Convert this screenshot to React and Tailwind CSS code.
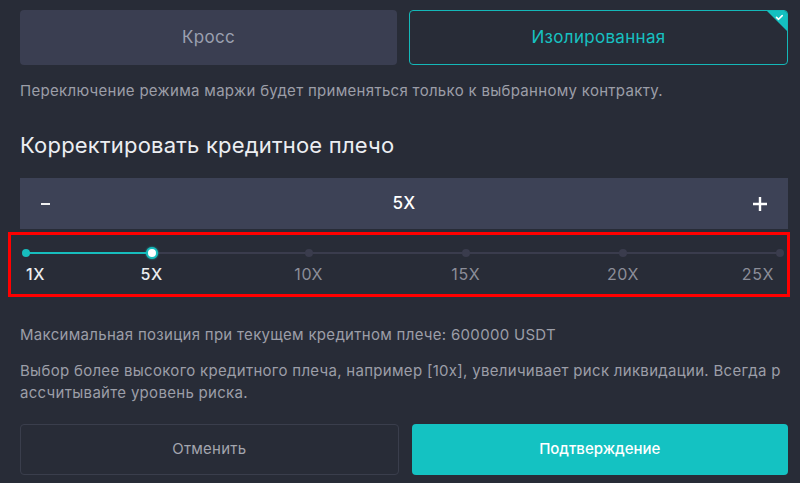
import React from "react";

const marks = [
  { label: "1X", value: 1 },
  { label: "5X", value: 5 },
  { label: "10X", value: 10 },
  { label: "15X", value: 15 },
  { label: "20X", value: 20 },
  { label: "25X", value: 25 },
];

const MIN = 1;
const MAX = 25;
const current = 5;

function pct(v) {
  return ((v - MIN) / (MAX - MIN)) * 100;
}

function LeverageSlider() {
  return (
    <div className="ml-[8px] mr-[10px] mt-[3px] h-[65px] border-[3px] border-[#ff0000] pl-[15px] pr-[7px] pt-[12px]">
      <div className="relative h-[12px]">
        {/* track */}
        <div className="absolute left-0 right-0 top-[5px] h-[2px] bg-[#3a3c4d]" />
        <div
          className="absolute left-0 top-[5px] h-[2px] bg-[#17bdbd]"
          style={{ width: `${pct(current)}%` }}
        />
        {marks.map((m) => {
          const active = m.value <= current;
          if (m.value === current) {
            return (
              <div
                key={m.label}
                className="absolute top-0 h-[12px] w-[12px] -translate-x-1/2 rounded-full border-[2px] border-[#17bdbd] bg-white shadow-[0_0_2px_#17bdbd]"
                style={{ left: `${pct(m.value)}%` }}
              />
            );
          }
          return (
            <div
              key={m.label}
              className={
                "absolute top-[2px] h-[8px] w-[8px] -translate-x-1/2 rounded-full " +
                (active ? "bg-[#17bdbd]" : "bg-[#3a3c4d]")
              }
              style={{ left: `${pct(m.value)}%` }}
            />
          );
        })}
      </div>
      <div className="relative mt-[5px] h-[20px] text-[16px] leading-[20px] tracking-[0.6px]">
        {marks.map((m, i) => {
          const active = m.value <= current;
          const color = active ? "font-medium text-[#eceef0]" : "text-[#8c8e99]";
          let pos = "-translate-x-1/2";
          let style = { left: `${pct(m.value)}%` };
          if (i === 0) {
            pos = "";
            style = { left: "0px" };
          } else if (i === marks.length - 1) {
            pos = "";
            style = { right: "6px" };
          }
          return (
            <span key={m.label} className={`absolute top-0 ${pos} ${color}`} style={style}>
              {m.label}
            </span>
          );
        })}
      </div>
    </div>
  );
}

export default function App() {
  return (
    <div
      className="h-[483px] w-[800px] overflow-hidden bg-[#282c37] text-[#9c9ea8]"
      style={{ fontFamily: "Inter, 'Noto Sans', sans-serif" }}
    >
      {/* margin mode */}
      <div className="flex gap-[12px] pl-[20px] pr-[12px] pt-[10px]">
        <button className="flex h-[55px] flex-1 items-center justify-center rounded-[4px] bg-[#3a3e51] text-[17px] tracking-[0.3px] text-[#9ba0b0]">
          Кросс
        </button>
        <button className="relative flex h-[55px] flex-1 items-center justify-center overflow-hidden rounded-[4px] border-[1.5px] border-[#14b8b8] text-[17px] tracking-[0.3px] text-[#17c1c1]">
          Изолированная
          <span className="absolute right-0 top-0 h-[20px] w-[20px]">
            <svg width="20" height="20" viewBox="0 0 20 20">
              <polygon points="0,0 20,0 20,20" fill="#14c0c0" />
              <path d="M9.5 6.3 L11.6 8.3 L15.2 4.6" fill="none" stroke="#ffffff" strokeWidth="1.6" strokeLinecap="round" strokeLinejoin="round" />
            </svg>
          </span>
        </button>
      </div>

      <p className="mt-[16px] pl-[20px] pr-[12px] text-[15px] leading-[20px] tracking-[0.3px] text-[#9c9ea8]">
        Переключение режима маржи будет применяться только к выбранному контракту.
      </p>

      <h2 className="mt-[31px] pl-[20px] pr-[12px] text-[22px] leading-[26px] tracking-[0.2px] text-[#eceef2]">
        Корректировать кредитное плечо
      </h2>

      {/* stepper */}
      <div className="ml-[20px] mr-[12px] mt-[20px] flex h-[51px] items-center justify-between bg-[#3d4256] px-[20px] text-white">
        <span className="flex w-[16px] items-center justify-start">
          <span className="ml-[1px] block h-[2px] w-[9px] bg-[#f0f0f0]" />
        </span>
        <span className="text-[17px] font-medium tracking-[0.3px]">5X</span>
        <span className="flex w-[16px] items-center justify-center">
          <svg width="16" height="16" viewBox="0 0 16 16">
            <path d="M8 1 V15 M1 8 H15" stroke="#ffffff" strokeWidth="2.4" />
          </svg>
        </span>
      </div>

      <LeverageSlider />

      <p className="mt-[28px] pl-[20px] pr-[12px] text-[15px] leading-[20px] tracking-[0.3px]">
        Максимальная позиция при текущем кредитном плече: 600000 USDT
      </p>
      <div className="mt-[15px] overflow-hidden whitespace-nowrap pl-[20px] pr-[12px] text-[15px] leading-[22px] tracking-[0.3px]">
        <div>
          Выбор более высокого кредитного плеча, например [10x], увеличивает риск ликвидации. Всегда р
        </div>
        <div>ассчитывайте уровень риска.</div>
      </div>

      <div className="mt-[20px] flex gap-[13px] pl-[20px] pr-[12px]">
        <button className="flex h-[51px] flex-1 items-center justify-center rounded-[4px] border border-[#3a3e4c] text-[15px] tracking-[0.2px] text-[#a3a5ae]">
          Отменить
        </button>
        <button className="flex h-[51px] flex-1 items-center justify-center rounded-[4px] bg-[#14c2c2] text-[15px] font-medium text-white">
          Подтверждение
        </button>
      </div>
    </div>
  );
}
